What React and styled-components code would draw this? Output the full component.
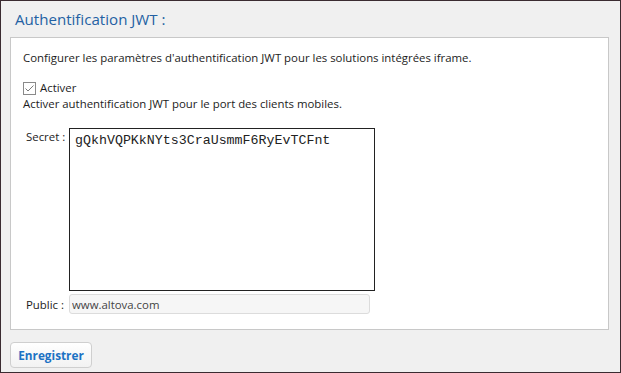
import React, { useState } from 'react';
import styled, { createGlobalStyle } from 'styled-components';

const GlobalStyle = createGlobalStyle`
    html, body {
        margin: 0;
        padding: 0;
        background: #f0f0f0;
    }
    body {
        font-family: "Open Sans", "Noto Sans", sans-serif;
        font-size: 11.4px;
        color: #1c1c1c;
    }
`;

const Frame = styled.div`
    box-sizing: border-box;
    width: 621px;
    height: 373px;
    border: 1px solid #3b2b31;
    background: #f0f0f0;
    padding: 0 11px 0 9px;
    display: flex;
    flex-direction: column;
`;

const Title = styled.h2`
    margin: 0;
    height: 36px;
    padding-left: 5px;
    display: flex;
    align-items: center;
    font-size: 15.1px;
    font-weight: 400;
    color: #2361a3;
`;

const Panel = styled.div`
    box-sizing: border-box;
    height: 293px;
    background: #fff;
    border: 1px solid #c8c8c8;
    padding: 12px 12px 0 12px;
    display: flex;
    flex-direction: column;
`;

const Line = styled.div`
    line-height: 16px;
    margin-top: ${(p) => p.$top || 0}px;
`;

const CheckRow = styled.label`
    display: flex;
    align-items: center;
    gap: 4px;
    margin-top: 14px;
    line-height: 16px;
`;

const Box = styled.span`
    box-sizing: border-box;
    width: 13px;
    height: 13px;
    border: 1px solid #8a8a8a;
    background: #fff;
    display: flex;
    align-items: center;
    justify-content: center;
`;

const FieldRow = styled.div`
    display: flex;
    align-items: flex-start;
    margin-top: ${(p) => p.$top || 0}px;
`;

const Label = styled.span`
    width: 46px;
    flex: none;
    white-space: nowrap;
    padding-left: 3px;
    box-sizing: border-box;
    line-height: 16px;
    padding-top: ${(p) => p.$pt || 0}px;
`;

const SecretArea = styled.textarea`
    box-sizing: border-box;
    width: 306px;
    height: 163px;
    border: 1px solid #222;
    margin: 0;
    padding: 4px 5px;
    resize: none;
    font-family: "Liberation Mono", "Courier New", monospace;
    font-size: 13.3px;
    line-height: 16px;
    color: #222;
    outline: none;
`;

const PublicInput = styled.input`
    box-sizing: border-box;
    width: 301px;
    height: 20px;
    margin: 0;
    border: 1px solid #dcdcdc;
    border-radius: 3px;
    background: #f6f6f6;
    padding: 0 2px;
    font-family: "Open Sans", "Noto Sans", sans-serif;
    font-size: 11.4px;
    color: #444;
    outline: none;
`;

const Footer = styled.div`
    padding-top: 12px;
`;

const SaveButton = styled.button`
    box-sizing: border-box;
    width: 82px;
    height: 26px;
    border: 1px solid #cfcfcf;
    border-radius: 4px;
    background: linear-gradient(#ffffff, #f2f2f2);
    font-family: "Open Sans", "Noto Sans", sans-serif;
    font-size: 11.8px;
    font-weight: 700;
    color: #1c72c4;
    cursor: pointer;
`;

const CheckMark = () => (
    <svg width="11" height="11" viewBox="0 0 11 11">
        <path d="M1.5 5.5 L4 8 L9.5 2.5" fill="none" stroke="#7a7a7a" strokeWidth="1" />
    </svg>
);

const App = () => {
    const [secret, setSecret] = useState('gQkhVQPKkNYts3CraUsmmF6RyEvTCFnt');

    return (
        <>
            <GlobalStyle />
            <Frame>
                <Title>Authentification JWT :</Title>
                <Panel>
                    <Line>Configurer les paramètres d'authentification JWT pour les solutions intégrées iframe.</Line>
                    <CheckRow>
                        <Box><CheckMark /></Box>
                        Activer
                    </CheckRow>
                    <Line>Activer authentification JWT pour le port des clients mobiles.</Line>
                    <FieldRow $top={16}>
                        <Label $pt={1}>Secret :</Label>
                        <SecretArea value={secret} onChange={(e) => setSecret(e.target.value)} spellCheck={false} />
                    </FieldRow>
                    <FieldRow $top={3}>
                        <Label $pt={3}>Public :</Label>
                        <PublicInput defaultValue="www.altova.com" readOnly />
                    </FieldRow>
                </Panel>
                <Footer>
                    <SaveButton>Enregistrer</SaveButton>
                </Footer>
            </Frame>
        </>
    );
};

export default App;
